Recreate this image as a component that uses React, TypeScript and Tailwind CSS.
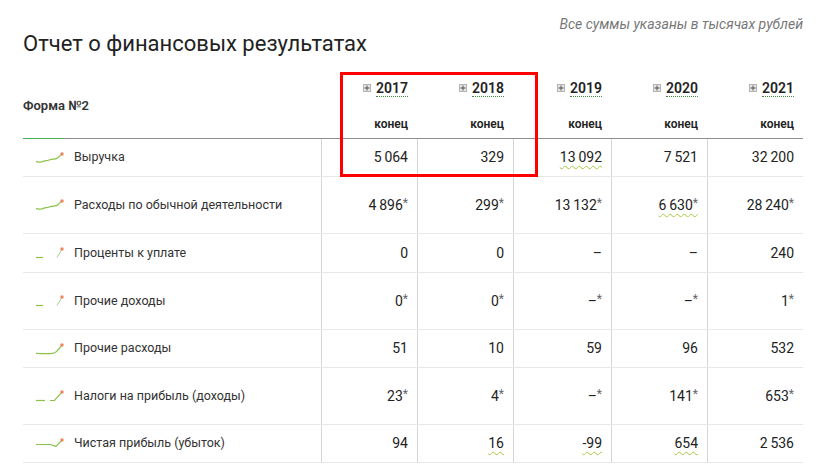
// Financial results table (form No.2) with sparklines and a red annotation box.

type SparkKind = 'rise' | 'gap' | 'flatUp' | 'gapUp' | 'dipUp'

interface Cell {
  v: string
  wavy?: boolean
}

interface Row {
  label: string
  spark: SparkKind
  tall?: boolean
  h?: string
  values: Cell[]
}

const YEARS = ['2017', '2018', '2019', '2020', '2021']

const ROWS: Row[] = [
  {
    label: 'Выручка',
    spark: 'rise',
    values: [{ v: '5\u2009064' }, { v: '329' }, { v: '13\u2009092', wavy: true }, { v: '7\u2009521' }, { v: '32\u2009200' }],
  },
  {
    label: 'Расходы по обычной деятельности',
    spark: 'rise',
    tall: true,
    values: [{ v: '4\u2009896*' }, { v: '299*' }, { v: '13\u2009132*' }, { v: '6\u2009630*', wavy: true }, { v: '28\u2009240*' }],
  },
  {
    label: 'Проценты к уплате',
    spark: 'gap',
    h: 'h-[39px]',
    values: [{ v: '0' }, { v: '0' }, { v: '–' }, { v: '–' }, { v: '240' }],
  },
  {
    label: 'Прочие доходы',
    spark: 'gap',
    tall: true,
    values: [{ v: '0*' }, { v: '0*' }, { v: '–*' }, { v: '–*' }, { v: '1*' }],
  },
  {
    label: 'Прочие расходы',
    spark: 'flatUp',
    values: [{ v: '51' }, { v: '10' }, { v: '59' }, { v: '96' }, { v: '532' }],
  },
  {
    label: 'Налоги на прибыль (доходы)',
    spark: 'gapUp',
    tall: true,
    values: [{ v: '23*' }, { v: '4*' }, { v: '–*' }, { v: '141*' }, { v: '653*' }],
  },
  {
    label: 'Чистая прибыль (убыток)',
    spark: 'dipUp',
    values: [{ v: '94' }, { v: '16', wavy: true }, { v: '-99', wavy: true }, { v: '654', wavy: true }, { v: '2\u2009536' }],
  },
]

function Spark({ kind }: { kind: SparkKind }) {
  const green = '#8bc34a'
  return (
    <svg width="28" height="12" viewBox="0 0 28 12" fill="none" className="shrink-0">
      {kind === 'rise' && (
        <path
          d="M0 9.6 C2 9.8 3.5 10.6 5.5 10 C7.5 9.3 8.5 8.8 10.5 8.6 C12.5 8.4 13.5 7.6 15.5 7.3 C17.5 7 19 7.4 21 6.4 L25.5 2.4"
          stroke={green}
          strokeWidth="1.2"
        />
      )}
      {kind === 'gap' && (
        <>
          <path d="M0 10.5 H7" stroke={green} strokeWidth="1.2" />
          <path d="M21 10.5 L25.5 3" stroke="#a9cf8a" strokeWidth="1" />
        </>
      )}
      {kind === 'flatUp' && (
        <path d="M0 10.4 C6 10.8 12 10.9 17 10.3 C20 10 22 7.5 25.5 2.6" stroke={green} strokeWidth="1.2" />
      )}
      {kind === 'gapUp' && (
        <>
          <path d="M0 10.5 H9" stroke={green} strokeWidth="1.2" />
          <path d="M14 10.5 H18.5 L25.5 2.6" stroke={green} strokeWidth="1.2" />
        </>
      )}
      {kind === 'dipUp' && (
        <path d="M0 6.5 H13 C16 6.6 18 8 20 8.4 L25.5 2.6" stroke={green} strokeWidth="1.2" />
      )}
      <circle cx="26" cy="2" r="1.7" fill="#f2845c" />
    </svg>
  )
}

function PlusBox() {
  return (
    <span className="inline-flex h-[8px] w-[8px] items-center justify-center border border-[#b5b5b5] bg-[#e4e4e4]">
      <svg width="6" height="6" viewBox="0 0 6 6">
        <path d="M3 0.5 V5.5 M0.5 3 H5.5" stroke="#555" strokeWidth="1" />
      </svg>
    </span>
  )
}

// splits a trailing asterisk so it can be drawn small and grey
function Value({ cell }: { cell: Cell }) {
  const star = cell.v.endsWith('*')
  const text = star ? cell.v.slice(0, -1) : cell.v
  return (
    <span
      className={
        cell.wavy ? 'underline decoration-[#a5c83c] decoration-wavy decoration-1 underline-offset-[3px]' : ''
      }
    >
      {text}
      {star && <span className="relative top-[-3px] text-[12px] text-[#666]">*</span>}
    </span>
  )
}

export default function App() {
  return (
    <div className="relative h-[471px] w-[817px] overflow-hidden bg-white font-['Roboto',sans-serif] text-[#333]">
      <div className="pl-[23px] pr-[14px] pt-[14px]">
        <p className="text-right text-[14px] italic leading-[20px] text-[#777]">Все суммы указаны в тысячах рублей</p>
        <h2 className="mt-[-3px] text-[22px] leading-[26px] text-[#222]">Отчет о финансовых результатах</h2>

        <div className="mt-[16px] w-[780px]">
          {/* header */}
          <div className="relative flex h-[66px] border-b border-[#8d8d8d]">
            <div className="flex w-[298px] items-center text-[13px] font-semibold text-[#333]">Форма №2</div>
            {YEARS.map((y, i) => (
              <div key={y} className={`flex flex-col items-end pr-[9px] pt-[6px] ${i === 2 ? 'w-[98px]' : 'w-[96px]'}`}>
                <div className="flex h-[18px] items-center gap-[5px]">
                  <PlusBox />
                  <span className="border-b border-dotted border-[#3d8b3d] text-[14px] font-semibold leading-[16px] text-[#222]">
                    {y}
                  </span>
                </div>
                <div className="mt-[18px] text-[12px] font-semibold leading-[18px] text-[#222]">конец</div>
              </div>
            ))}
            <span className="absolute bottom-[-1px] left-0 h-px w-[42px] bg-[#4caf50]" />
          </div>

          {/* body */}
          {ROWS.map((r) => (
            <div
              key={r.label}
              className={`flex border-b border-[#e8e8e8] ${r.h ?? (r.tall ? 'h-[57px]' : 'h-[38px]')}`}
            >
              <div className="flex w-[298px] items-center gap-[10px] pl-[13px] text-[12.5px]">
                <Spark kind={r.spark} />
                <span>{r.label}</span>
              </div>
              {r.values.map((c, i) => (
                <div
                  key={i}
                  className={`flex items-center justify-end border-l border-[#d6d6d6] pr-[9px] text-[14px] text-[#222] ${i === 2 ? 'w-[98px]' : 'w-[96px]'}`}
                >
                  <Value cell={c} />
                </div>
              ))}
            </div>
          ))}
        </div>
      </div>

      {/* red annotation frame */}
      <div className="pointer-events-none absolute left-[340px] top-[72px] h-[105px] w-[198px] border-[3px] border-[#ff0000]" />
    </div>
  )
}
